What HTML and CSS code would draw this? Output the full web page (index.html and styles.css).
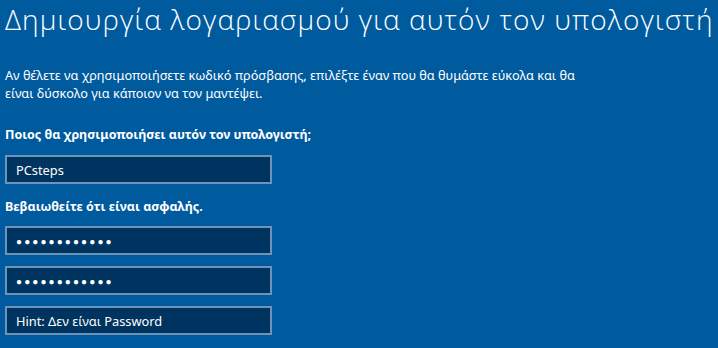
FILE: index.html
```html
<!DOCTYPE html>
<html lang="el">
<head>
<meta charset="utf-8">
<link rel="stylesheet" href="styles.css">
</head>
<body>
<main class="page">
  <h1 class="title">Δημιουργία λογαριασμού για αυτόν τον υπολογιστή</h1>
  <p class="intro">Αν θέλετε να χρησιμοποιήσετε κωδικό πρόσβασης, επιλέξτε έναν που θα θυμάστε εύκολα και θα<br>είναι δύσκολο για κάποιον να τον μαντέψει.</p>
  <p class="label label-first">Ποιος θα χρησιμοποιήσει αυτόν τον υπολογιστή;</p>
  <div class="field">PCsteps</div>
  <p class="label">Βεβαιωθείτε ότι είναι ασφαλής.</p>
  <div class="fields">
    <div class="field dots">●●●●●●●●●●●●</div>
    <div class="field dots">●●●●●●●●●●●●</div>
    <div class="field">Hint: Δεν είναι Password</div>
  </div>
</main>
</body>
</html>
```

FILE: styles.css
```css
html, body {
  margin: 0;
  padding: 0;
  background: #005a9e;
  height: 100%;
  overflow: hidden;
}
.page {
  padding: 0 0 0 5px;
  color: #ffffff;
  font-family: "Noto Sans", "Open Sans", sans-serif;
}
.title {
  margin: 0;
  padding-top: 1px;
  font-family: "Open Sans", "Noto Sans", sans-serif;
  font-weight: 300;
  font-size: 28px;
  line-height: 36px;
  letter-spacing: 1.1px;
  white-space: nowrap;
}
.intro {
  margin: 29px 0 0 0;
  font-size: 12.7px;
  line-height: 18px;
  white-space: nowrap;
}
.label {
  margin: 0;
  font-size: 12.5px;
  line-height: 18px;
  font-weight: 700;
}
.label-first {
  margin-top: 24px;
  margin-bottom: 11px;
}
.field {
  box-sizing: border-box;
  width: 267px;
  height: 29px;
  border: 2px solid #6f93b8;
  background: #003460;
  padding: 0 0 0 9px;
  display: flex;
  align-items: center;
  font-size: 12.8px;
}
.field + .label {
  margin-top: 14px;
  margin-bottom: 10px;
}
.fields {
  display: flex;
  flex-direction: column;
  gap: 11px;
}
.dots {
  font-size: 10px;
  letter-spacing: 2.1px;
}
```
